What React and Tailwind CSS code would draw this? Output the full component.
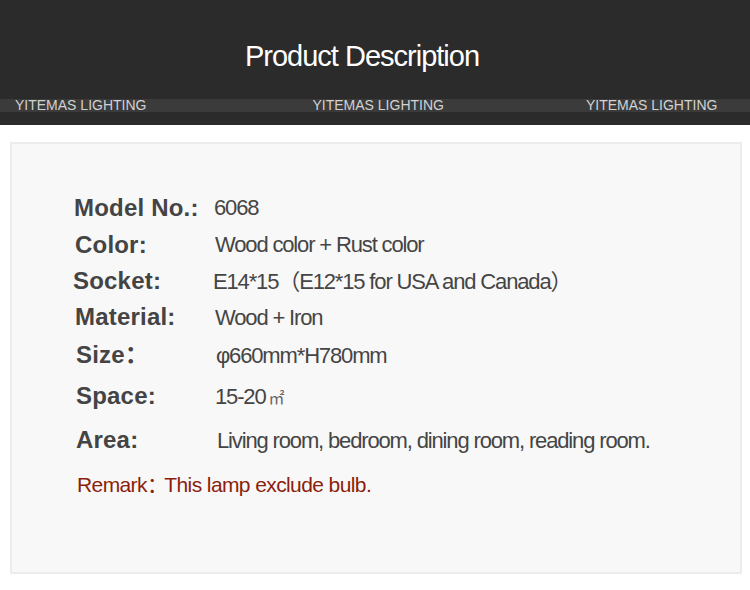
import React from 'react'

const specs = [
    {label: 'Model No.:', value: '6068', h: 'h-[37px]', lx: 'ml-0', vx: 'ml-0'},
    {label: 'Color:', value: 'Wood color + Rust color', h: 'h-[37px]', lx: 'ml-[1px]', vx: 'ml-0'},
    {label: 'Socket:', value: 'E14*15（E12*15 for USA and Canada）', h: 'h-[36px]', lx: 'ml-[-1px]', vx: 'ml-0'},
    {label: 'Material:', value: 'Wood + Iron', h: 'h-[36px]', lx: 'ml-[1px]', vx: 'ml-0'},
    {label: 'Size：', value: 'φ660mm*H780mm', h: 'h-[40px]', lx: 'ml-[2px]', vx: 'ml-0'},
    {label: 'Space:', value: '15-20', unit: true, h: 'h-[42px]', lx: 'ml-[2px]', vx: 'ml-[-1px]'},
    {label: 'Area:', value: 'Living room, bedroom, dining room, reading room.', h: 'h-[46px]', lx: 'ml-[2px]', vx: 'ml-[1px]'},
]

const SpecRow = ({spec}) => (
    <div className={`flex items-center ${spec.h}`}>
        <div className={`w-[140px] shrink-0 text-[24px] tracking-[0.2px] font-bold text-[#444444] ${spec.lx}`}>{spec.label}</div>
        <div className={`text-[22px] tracking-[-1.15px] text-[#454545] whitespace-nowrap ${spec.vx}`}>
            {spec.value}
            {spec.unit && <span className="ml-[3px] text-[16px] tracking-normal text-[#666666]" style={{fontFamily: '"Noto Sans CJK SC", sans-serif'}}>㎡</span>}
        </div>
    </div>
)

const App = () => {
    return (
        <div className="w-[750px] h-[590px] bg-white overflow-hidden" style={{fontFamily: '"Liberation Sans", Arial, "Noto Sans CJK SC", sans-serif'}}>
            <div className="h-[125px] bg-[#2b2b2b] flex flex-col pt-[40px]">
                <div className="h-[32px] leading-[32px] pr-[26px] text-center text-white text-[29px] tracking-[-1px]">Product Description</div>
                <div className="mt-[27px] h-[13px] bg-[#3b3b3b] flex text-[14px] leading-[13px] text-[#d2d2d2] whitespace-nowrap">
                    <span className="ml-[15px]">YITEMAS LIGHTING</span>
                    <span className="ml-[166px]">YITEMAS LIGHTING</span>
                    <span className="ml-[142px]">YITEMAS LIGHTING</span>
                </div>
            </div>
            <div className="ml-[10px] mt-[17px] w-[732px] h-[432px] bg-[#f8f8f8] border-2 border-[#ececec] pt-[45px] pl-[62px]">
                {specs.map((spec, i) => <SpecRow spec={spec} key={i}/>)}
                <div className="flex items-center h-[44px] ml-[3px] text-[21px] tracking-[-0.6px] text-[#8b1e0c] whitespace-nowrap">
                    <span>Remark：</span>
                    <span className="ml-[-3px]">This lamp exclude bulb.</span>
                </div>
            </div>
        </div>
    )
}
export default App
